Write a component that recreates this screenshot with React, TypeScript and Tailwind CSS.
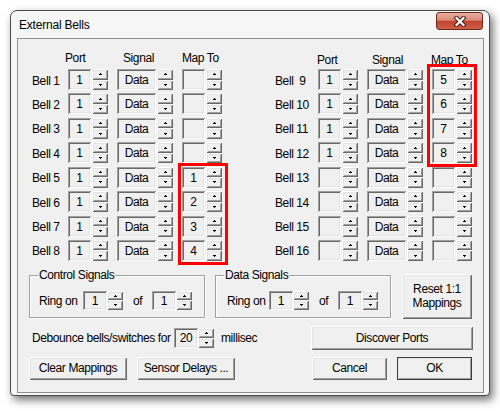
import React from 'react';

const raised =
  'shadow-[inset_1px_1px_#ffffff,inset_-1px_-1px_#696969,inset_2px_2px_#e3e3e3,inset_-2px_-2px_#a0a0a0]';
const sunken =
  'shadow-[inset_1px_1px_#a0a0a0,inset_-1px_-1px_#ffffff,inset_2px_2px_#696969,inset_-2px_-2px_#e3e3e3]';

const UpArrow = () => (
  <svg width="3" height="2" viewBox="0 0 3 2" shapeRendering="crispEdges">
    <rect x="1" y="0" width="1" height="1" fill="#000" />
    <rect x="0" y="1" width="3" height="1" fill="#000" />
  </svg>
);

const DownArrow = () => (
  <svg width="3" height="2" viewBox="0 0 3 2" shapeRendering="crispEdges">
    <rect x="0" y="0" width="3" height="1" fill="#000" />
    <rect x="1" y="1" width="1" height="1" fill="#000" />
  </svg>
);

function Spinner({ className }: { className: string }) {
  return (
    <div className={`flex flex-col w-[16px] shrink-0 ${className}`}>
      <div className={`flex-1 flex items-center justify-center bg-[#f0f0f0] ${raised}`}>
        <UpArrow />
      </div>
      <div className={`flex-1 flex items-center justify-center bg-[#f0f0f0] ${raised}`}>
        <DownArrow />
      </div>
    </div>
  );
}

function Box({ className, children }: { className: string; children?: React.ReactNode }) {
  return (
    <div className={`flex items-center justify-center shrink-0 bg-[#f0f0f0] pt-[1px] ${sunken} ${className}`}>
      {children}
    </div>
  );
}

function Button({ className, children, isDefault }: { className: string; children: React.ReactNode; isDefault?: boolean }) {
  return (
    <div
      className={`flex items-center justify-center text-center leading-[14px] bg-[#f0f0f0] ${raised} ${
        isDefault ? 'outline outline-1 outline-[#3c3c3c] -outline-offset-1' : ''
      } ${className}`}
    >
      {children}
    </div>
  );
}

function BellRow({ label, port, map, labelW }: { label: string; port: string; map: string; labelW: string }) {
  return (
    <div className="flex h-[21px] items-center">
      <span className={`whitespace-pre pt-[2px] ${labelW}`}>{label}</span>
      <Box className="w-[23px] h-[21px]">{port}</Box>
      <Spinner className="ml-[1px] h-[21px]" />
      <Box className="ml-[9px] w-[39px] h-[21px]">Data</Box>
      <Spinner className="ml-[1px] h-[21px]" />
      <Box className="ml-[9px] w-[23px] h-[21px]">{map}</Box>
      <Spinner className="ml-[1px] h-[21px]" />
    </div>
  );
}

const leftBells = [
  { label: 'Bell 1', port: '1', map: '' },
  { label: 'Bell 2', port: '1', map: '' },
  { label: 'Bell 3', port: '1', map: '' },
  { label: 'Bell 4', port: '1', map: '' },
  { label: 'Bell 5', port: '1', map: '1' },
  { label: 'Bell 6', port: '1', map: '2' },
  { label: 'Bell 7', port: '1', map: '3' },
  { label: 'Bell 8', port: '1', map: '4' },
];

const rightBells = [
  { label: 'Bell  9', port: '1', map: '5' },
  { label: 'Bell 10', port: '1', map: '6' },
  { label: 'Bell 11', port: '1', map: '7' },
  { label: 'Bell 12', port: '1', map: '8' },
  { label: 'Bell 13', port: '', map: '' },
  { label: 'Bell 14', port: '', map: '' },
  { label: 'Bell 15', port: '', map: '' },
  { label: 'Bell 16', port: '', map: '' },
];

function SignalGroup({ title, textPad }: { title: string; textPad: string }) {
  return (
    <div className="relative w-[176px] h-[43px] mt-[1px] border border-[#a0a0a0] shadow-[inset_1px_1px_#ffffff,1px_1px_#ffffff]">
      <span className="absolute -top-[8px] left-[8px] px-[1px] bg-[#f0f0f0] leading-[14px]">{title}</span>
      <div className="flex items-center pt-[15px]">
        <span className={`w-[53px] shrink-0 pt-[1px] ${textPad}`}>Ring on</span>
        <Box className="w-[24px] h-[19px]">1</Box>
        <Spinner className="h-[19px]" />
        <span className="ml-[10px] w-[19px] pt-[1px]">of</span>
        <Box className="w-[24px] h-[19px]">1</Box>
        <Spinner className="h-[19px]" />
      </div>
    </div>
  );
}

export default function App() {
  return (
    <div className="w-[500px] h-[411px] bg-white pt-[10px] pl-[10px] overflow-hidden font-['Liberation_Sans',Arial,sans-serif] text-[12px] tracking-[-0.4px] text-black">
      {/* Window */}
      <div className="w-[480px] h-[386px] flex flex-col border border-[#4a4a4a] rounded-t-[7px] rounded-b-[4px] bg-[#f6f6f6] shadow-[3px_4px_8px_rgba(0,0,0,0.55)]">
        {/* Title bar */}
        <div className="h-[27px] flex items-start shrink-0">
          <span className="pl-[8px] pt-[7px] text-[12px] leading-[14px] tracking-[-0.2px]">External Bells</span>
          <div className="ml-auto mr-[6px] mt-[1px] w-[47px] h-[18px] rounded-[3px] border border-[#6e2b22] bg-[linear-gradient(#eab0a2_0%,#d88876_45%,#c2432e_52%,#cf5e47_100%)] flex items-center justify-center">
            <svg width="14" height="11" viewBox="0 0 14 11">
              <path d="M3.5 2 L10.5 9 M10.5 2 L3.5 9" stroke="#4a2018" strokeWidth="4.2" strokeLinecap="square" />
              <path d="M3.5 2 L10.5 9 M10.5 2 L3.5 9" stroke="#ffffff" strokeWidth="2.2" strokeLinecap="square" />
            </svg>
          </div>
        </div>

        {/* Client area */}
        <div className="ml-[6px] mr-[5px] h-[355px] border border-[#8e8e8e] bg-[#f0f0f0] flex flex-col pt-[12px]">
          {/* Bells */}
          <div className="flex pl-[14px]">
            <div className="relative w-[190px]">
              <div className="h-[18px] flex leading-[14px]">
                <span className="w-[33px]" />
                <span className="w-[58px]">Port</span>
                <span className="w-[59px]">Signal</span>
                <span>Map To</span>
              </div>
              <div className="flex flex-col gap-[3.43px]">
                {leftBells.map((b) => (
                  <BellRow key={b.label} label={b.label} port={b.port} map={b.map} labelW="w-[36px]" />
                ))}
              </div>
              <div className="absolute left-[146px] top-[112px] w-[50px] h-[102px] border-[3px] border-[#ff0000]" />
            </div>

            <div className="relative ml-[53px] w-[197px]">
              <div className="h-[18px] flex leading-[14px] pt-[2px]">
                <span className="w-[42px]" />
                <span className="w-[55px]">Port</span>
                <span className="w-[59px]">Signal</span>
                <span>Map To</span>
              </div>
              <div className="flex flex-col gap-[3.43px]">
                {rightBells.map((b) => (
                  <BellRow key={b.label} label={b.label} port={b.port} map={b.map} labelW="w-[43px]" />
                ))}
              </div>
              <div className="absolute left-[152px] top-[13px] w-[50px] h-[103px] border-[3px] border-[#ff0000]" />
            </div>
          </div>

          {/* Signal groups */}
          <div className="flex items-start pl-[11px] pr-[11px] mt-[13px]">
            <SignalGroup title="Control Signals" textPad="pl-[9px]" />
            <div className="ml-[10px]">
              <SignalGroup title="Data Signals" textPad="pl-[11px]" />
            </div>
            <Button className="ml-auto w-[70px] h-[45px]">
              Reset 1:1
              <br />
              Mappings
            </Button>
          </div>

          {/* Debounce */}
          <div className="flex items-center pl-[14px] pr-[10px] mt-[7px] h-[24px]">
            <span className="w-[142px] shrink-0 pt-[1px]">Debounce bells/switches for</span>
            <Box className="w-[24px] h-[20px]">20</Box>
            <Spinner className="h-[20px]" />
            <span className="ml-[7px] pt-[1px]">millisec</span>
            <Button className="ml-auto w-[162px] h-[24px]">Discover Ports</Button>
          </div>

          {/* Buttons */}
          <div className="flex items-center pl-[11px] pr-[11px] mt-[7px] h-[23px]">
            <Button className="w-[98px] h-[23px]">Clear Mappings</Button>
            <Button className="ml-[10px] w-[98px] h-[23px]">Sensor Delays ...</Button>
            <Button className="ml-auto w-[75px] h-[23px]">Cancel</Button>
            <Button className="ml-[10px] w-[75px] h-[23px]" isDefault>
              OK
            </Button>
          </div>
        </div>
      </div>
    </div>
  );
}
